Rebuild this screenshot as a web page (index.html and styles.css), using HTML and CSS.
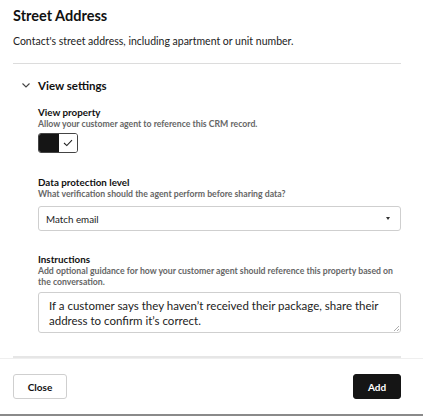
FILE: index.html
```html
<!DOCTYPE html>
<html lang="en">
<head>
    <meta charset="UTF-8">
    <meta name="viewport" content="width=device-width, initial-scale=1.0">
    <title>Street Address</title>
    <link rel="stylesheet" href="styles.css">
</head>
<body>
    <div class="panel">
        <div class="content">
            <h1>Street Address</h1>
            <p class="intro">Contact's street address, including apartment or unit number.</p>
            <hr class="divider">

            <div class="section-head">
                <svg class="chevron" width="10" height="10" viewBox="0 0 10 10">
                    <path d="M1.5 3.5 L5 7 L8.5 3.5" fill="none" stroke="#444" stroke-width="1.1"/>
                </svg>
                <span>View settings</span>
            </div>

            <div class="field field-first">
                <div class="field-label">View property</div>
                <div class="field-help">Allow your customer agent to reference this CRM record.</div>
                <div class="toggle">
                    <span class="toggle-on"></span>
                    <span class="toggle-knob">
                        <svg width="10" height="8" viewBox="0 0 10 8">
                            <path d="M1 4 L3.8 6.6 L9 1.2" fill="none" stroke="#222" stroke-width="1.1"/>
                        </svg>
                    </span>
                </div>
            </div>

            <div class="field field-protection">
                <div class="field-label">Data protection level</div>
                <div class="field-help">What verification should the agent perform before sharing data?</div>
                <div class="select">
                    <span>Match email</span>
                    <span class="caret"></span>
                </div>
            </div>

            <div class="field field-instructions">
                <div class="field-label">Instructions</div>
                <div class="field-help help-narrow">Add optional guidance for how your customer agent should reference this property based on the conversation.</div>
                <div class="textarea">
                    If a customer says they haven’t received their package, share their address to confirm it’s correct.
                    <svg class="grip" width="6" height="6" viewBox="0 0 6 6">
                        <path d="M6 1 L1 6 M6 4 L4 6" stroke="#999" stroke-width="0.8"/>
                    </svg>
                </div>
            </div>

            <div class="scroll-end"></div>
        </div>

        <div class="footer">
            <button class="btn">Close</button>
            <button class="btn btn-primary">Add</button>
        </div>
    </div>
</body>
</html>
```

FILE: styles.css
```css
html, body {
    margin: 0;
    padding: 0;
    background-color: #fff;
}
body {
    font-family: "Lato", "Noto Sans", sans-serif;
    color: #1f1f1f;
    width: 423px;
    height: 416px;
    overflow: hidden;
}
.panel {
    height: 414px;
    display: flex;
    flex-direction: column;
    border-bottom: 2px solid #8a8a8a;
}
.content {
    padding: 0 22px 0 13px;
}
h1 {
    font-size: 14.5px;
    font-weight: 700;
    line-height: 20px;
    margin: 6px 0 0;
    color: #111;
}
.intro {
    font-size: 10.5px;
    line-height: 14px;
    margin: 8px 0 0;
    color: #222;
}
.divider {
    border: none;
    border-top: 1px solid #dcdcdc;
    margin: 15px 0 0;
}
.section-head {
    display: flex;
    align-items: center;
    margin: 13px 0 0 8px;
    height: 16px;
    font-size: 11.5px;
    font-weight: 700;
    color: #111;
}
.chevron {
    margin-right: 7px;
}
.field {
    margin-left: 25px;
}
.field-first {
    margin-top: 13px;
}
.field-protection {
    margin-top: 23px;
}
.field-instructions {
    margin-top: 22px;
}
.field-label {
    font-size: 9.8px;
    font-weight: 700;
    line-height: 12px;
    color: #111;
}
.field-help {
    font-size: 8.7px;
    font-weight: 700;
    line-height: 11px;
    color: #666;
}
.help-narrow {
    max-width: 356px;
}
.toggle {
    display: flex;
    width: 40px;
    height: 20px;
    margin-top: 4px;
    border: 1px solid #444;
    border-radius: 3px;
    overflow: hidden;
    box-sizing: border-box;
}
.toggle-on {
    width: 20px;
    background-color: #151515;
}
.toggle-knob {
    flex: 1;
    display: flex;
    align-items: center;
    justify-content: center;
    background-color: #fff;
}
.select {
    display: flex;
    align-items: center;
    justify-content: space-between;
    height: 25px;
    margin-top: 7px;
    padding: 0 8px 0 7px;
    border: 1px solid #cfcfcf;
    border-radius: 3px;
    box-sizing: border-box;
    font-size: 9.8px;
    color: #222;
}
.caret {
    width: 0;
    height: 0;
    margin-right: 2px;
    border-left: 2.5px solid transparent;
    border-right: 2.5px solid transparent;
    border-top: 3px solid #333;
}
.textarea {
    position: relative;
    height: 41px;
    margin-top: 5px;
    padding: 5px 10px 0 10px;
    border: 1px solid #cfcfcf;
    border-radius: 3px;
    box-sizing: border-box;
    font-size: 11.5px;
    line-height: 15px;
    color: #222;
}
.grip {
    position: absolute;
    right: 1px;
    bottom: 1px;
}
.scroll-end {
    height: 2px;
    margin-top: 23px;
    background-color: #e6e6e6;
}
.footer {
    flex: 1;
    display: flex;
    justify-content: space-between;
    align-items: flex-start;
    padding: 15px 22px 0 13px;
    border-top: 1px solid #efefef;
}
.btn {
    height: 25px;
    padding: 0;
    font-family: inherit;
    font-size: 10px;
    font-weight: 700;
    border: 1px solid #cfcfcf;
    border-radius: 3px;
    background-color: #fff;
    color: #111;
    width: 54px;
}
.btn-primary {
    width: 48px;
    background-color: #151515;
    border-color: #151515;
    color: #fff;
}
```
